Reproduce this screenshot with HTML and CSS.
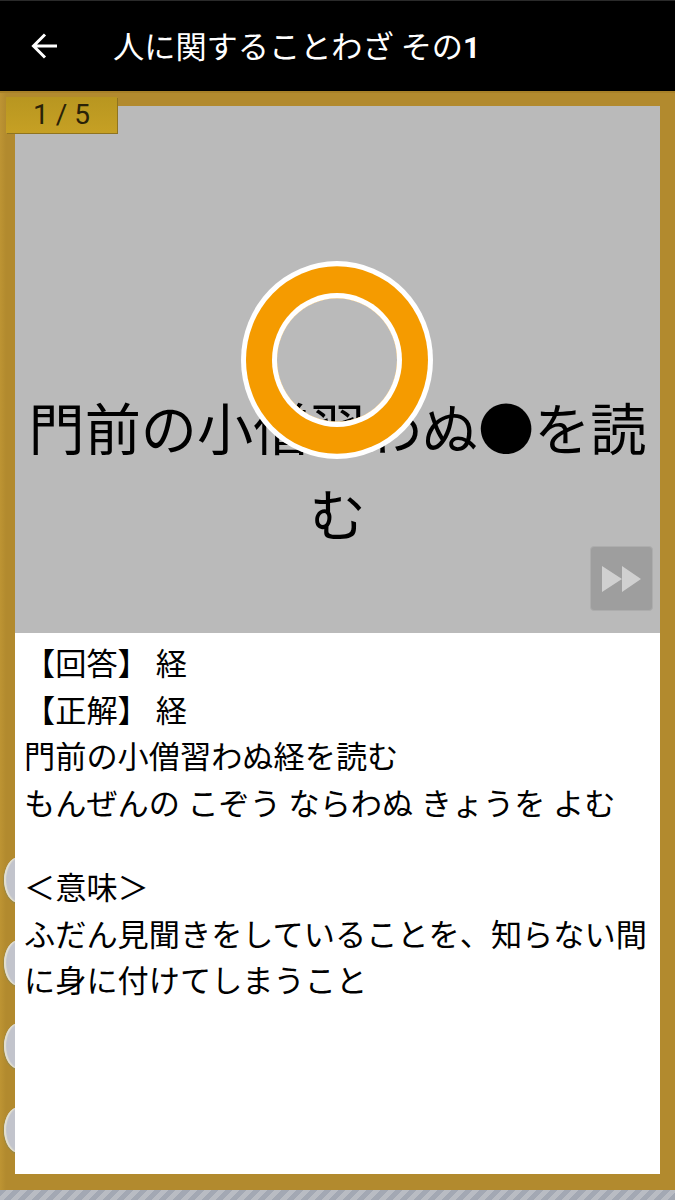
FILE: index.html
```html
<!DOCTYPE html>
<html lang="ja">
<head>
<meta charset="utf-8">
<title>人に関することわざ その1</title>
<link rel="stylesheet" href="styles.css">
</head>
<body>
<div class="app">
  <header class="bar">
    <svg class="back" viewBox="0 0 26 26" width="26" height="26"><path d="M26 13H3M14 1.500 2.500 13 14 24.500" fill="none" stroke="#fff" stroke-width="3"/></svg>
    <h1 class="title">人に関することわざ その<b>1</b></h1>
  </header>
  <main class="frame">
    <span class="hole hole-1"></span>
    <span class="hole hole-2"></span>
    <span class="hole hole-3"></span>
    <span class="hole hole-4"></span>
    <div class="badge">1 / 5</div>
    <div class="card">
      <section class="question">
        <p class="qtext">門前の小僧習わぬ●を読む</p>
        <div class="ring"></div>
        <div class="skip">
          <svg viewBox="0 0 40 28" width="40" height="28"><path d="M0 1 20 14 0 27ZM20 1 39 14 20 27Z" fill="#d0d0d0"/></svg>
        </div>
      </section>
      <section class="answer">
        <p>【回答】 経</p>
        <p>【正解】 経</p>
        <p>門前の小僧習わぬ経を読む</p>
        <p class="reading">もんぜんの こぞう ならわぬ きょうを よむ</p>
        <p class="gap">＜意味＞</p>
        <p>ふだん見聞きをしていることを、知らない間に身に付けてしまうこと</p>
      </section>
    </div>
  </main>
  <div class="hatch"></div>
</div>
</body>
</html>
```
FILE: styles.css
```css
* { box-sizing: border-box; }
html, body { margin: 0; padding: 0; }
body { font-family: "Noto Sans CJK JP", "Noto Sans", sans-serif; background: #b28a2e; }
.app { width: 675px; height: 1200px; display: flex; flex-direction: column; overflow: hidden; }
.bar { height: 91px; flex: none; background: #000; border-top: 1px solid #2a2a2a; display: flex; align-items: center; padding: 0 0 0 31px; color: #fff; }
.back { flex: none; margin-right: 56px; }
.title { margin: 0; font-size: 31.2px; font-weight: 400; line-height: 1; white-space: nowrap; }
.title b { font-family: Roboto, sans-serif; font-weight: 700; font-size: 30px; }
.frame { position: relative; flex: none; height: 1099px; padding: 15px 15px 16px 15px; background: linear-gradient(90deg, #bd9433 0, #b28a2e 6px); box-shadow: inset 0 2px 0 #a88128; }
.card { position: relative; z-index: 1; height: 100%; display: flex; flex-direction: column; background: #fff; }
.question { position: relative; height: 527px; flex: none; background: #bababa; display: flex; align-items: center; justify-content: center; padding: 199px 11px 0; }
.qtext { margin: 0; font-size: 56.2px; line-height: 86px; color: #000; text-align: center; }
.ring { position: absolute; left: 262px; top: 194px; width: 120px; height: 120px; border-radius: 50%; transform: scaleY(1.03); box-shadow: 0 0 0 5px #fff, 0 0 0 31px #f59b00, 0 0 0 36px #fff; }
.skip { position: absolute; right: 7px; bottom: 22px; width: 63px; height: 65px; border-radius: 4px; background: #9e9e9e; border: 1px solid #adadad; display: flex; align-items: center; justify-content: center; }
.answer { padding: 6px 9px 0; font-size: 31.2px; line-height: 46.5px; color: #000; }
.answer p { margin: 0; }
.answer .reading { word-spacing: 0.5px; }
.answer .gap { margin-top: 38px; }
.badge { position: absolute; left: 6px; top: 6px; width: 111px; height: 36px; background: linear-gradient(#b89620, #c6a024); box-shadow: 1px 1px 0 #8f7420; color: #2a2208; font-family: Roboto, sans-serif; font-size: 28px; line-height: 36px; text-align: center; z-index: 2; }
.hole { position: absolute; left: 4px; width: 30px; height: 46px; border-radius: 50%; background: #c2c4cc; box-shadow: inset 2px 0 1px #e4e0d0, 0 2px 0 #a08a40, -1px 1px 0 #a08a40; z-index: 0; }
.hole-1 { top: 766px; }
.hole-2 { top: 849px; }
.hole-3 { top: 932px; }
.hole-4 { top: 1016px; }
.hatch { flex: 1; background: repeating-linear-gradient(-45deg, #a3a8b3 0 5px, #b9bcc3 5px 10px); }
```
